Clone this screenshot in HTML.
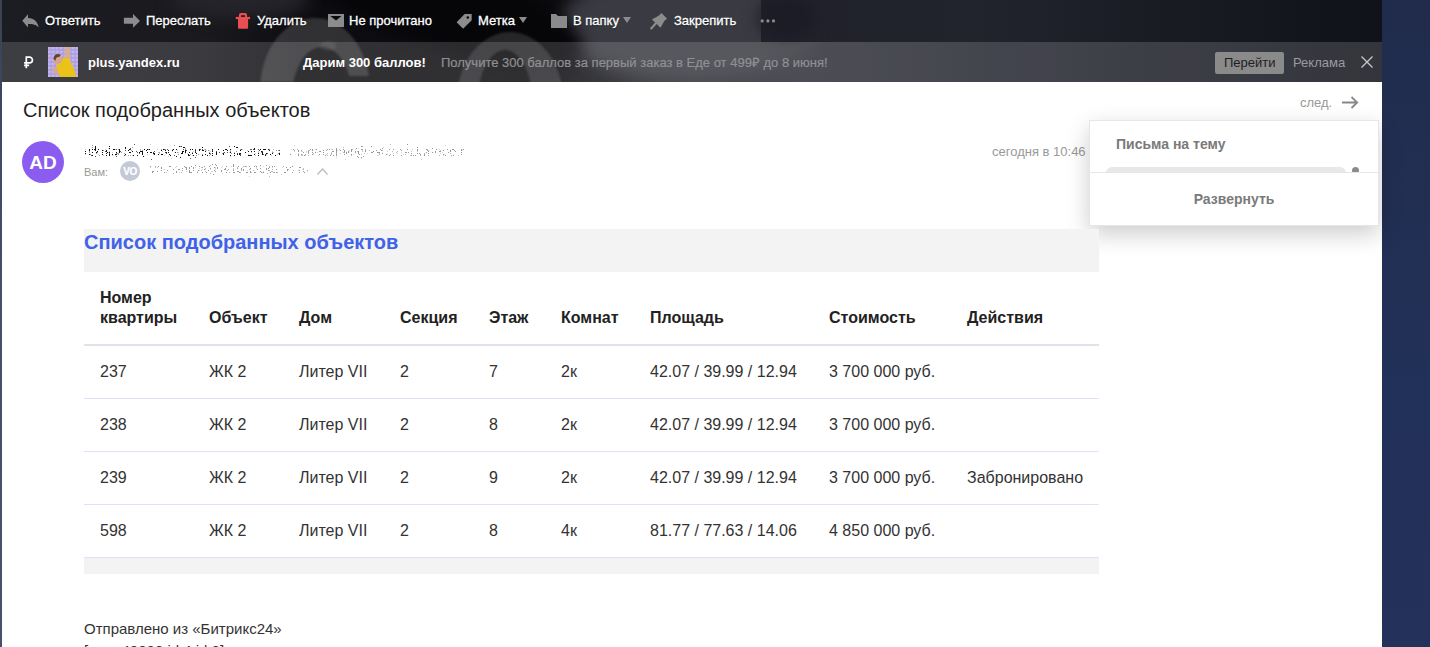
<!DOCTYPE html>
<html><head><meta charset="utf-8">
<style>
*{margin:0;padding:0;box-sizing:border-box}
html,body{width:1430px;height:647px;overflow:hidden}
body{background:#223056;font-family:"Liberation Sans",sans-serif;position:relative}
.a{position:absolute;white-space:nowrap}
#leftstrip{position:absolute;left:0;top:0;width:2px;height:647px;background:linear-gradient(180deg,#3b4152 0%,#434b63 25%,#46506c 50%,#47516d 100%)}
#rightbg{position:absolute;left:1382px;top:0;width:48px;height:647px;background:linear-gradient(180deg,#212c4c 0%,#223159 60%,#24315a 100%)}
#top{position:absolute;left:2px;top:0;width:1380px;height:82px;background:#111216;overflow:hidden}
#adbar{position:absolute;left:2px;top:42px;width:1380px;height:40px;background:rgba(255,255,255,0.15)}
#content{position:absolute;left:2px;top:82px;width:1380px;height:565px;background:#fff}
.tb{font-size:13px;color:#fff;line-height:16px;top:12.5px;-webkit-text-stroke:0.3px #fff;text-shadow:0 1px 1px rgba(0,0,0,.7)}
.ad{font-size:13px;line-height:16px;top:55px}
td.h{padding:17px 0 16px 16px;border-bottom:2px solid #dfe2e8;vertical-align:bottom}
tr.r td{padding:16px 0 16px 16px;border-bottom:1px solid #dde3f6;height:53px;white-space:nowrap}
</style></head><body>
<div id="leftstrip"></div>
<div id="rightbg"></div>
<div id="top">
  <svg style="position:absolute;left:-2px;top:0" width="1382" height="82">
    <defs>
      <linearGradient id="rg" x1="0" x2="1" y1="0" y2="0">
        <stop offset="0" stop-color="#1c1d22"/>
        <stop offset="0.15" stop-color="#19191e"/>
        <stop offset="0.22" stop-color="#0d0d11"/>
        <stop offset="0.40" stop-color="#0b0b0f"/>
        <stop offset="0.48" stop-color="#24252c"/>
        <stop offset="0.58" stop-color="#2e2f38"/>
        <stop offset="0.72" stop-color="#23252f"/>
        <stop offset="1" stop-color="#10121a"/>
      </linearGradient>
      <linearGradient id="rg2" x1="0" x2="1" y1="0" y2="0"><stop offset="0" stop-color="#20212a"/><stop offset="0.35" stop-color="#22242d"/><stop offset="1" stop-color="#10121a"/></linearGradient>
      <filter id="bl" x="-50%" y="-50%" width="200%" height="200%" color-interpolation-filters="sRGB"><feGaussianBlur stdDeviation="8"/></filter>
      <filter id="bl2" x="-20%" y="-20%" width="140%" height="140%" color-interpolation-filters="sRGB"><feGaussianBlur stdDeviation="1"/></filter>
      <clipPath id="c1"><path d="M0 0 H345 V82 H0 Z M345 0 H400 V76 H345 Z"/></clipPath>
    </defs>
    <rect x="0" y="0" width="1382" height="82" fill="url(#rg)"/>
    <ellipse cx="240" cy="0" rx="70" ry="18" fill="#24242a" filter="url(#bl)"/>
    <ellipse cx="690" cy="25" rx="130" ry="55" fill="#3a3a42" filter="url(#bl)"/>
    <rect x="761" y="0" width="621" height="42" fill="url(#rg2)"/>
    <ellipse cx="440" cy="5" rx="150" ry="42" fill="#060609" filter="url(#bl)" transform="rotate(18 440 5)"/>
    <ellipse cx="787" cy="18" rx="28" ry="22" fill="#1b1c25" filter="url(#bl)"/>
    <g filter="url(#bl2)">
    <path clip-path="url(#c1)" fill-rule="evenodd" fill="#ffffff" fill-opacity="0.15" d="M260 90 A55 72 0 1 1 370 90 A55 72 0 1 1 260 90 Z M292 97 A30 50 0 1 0 352 97 A30 50 0 1 0 292 97 Z"/>
    <ellipse cx="328" cy="46" rx="8" ry="5" fill="#ffffff" fill-opacity="0.08"/>
    <path fill-rule="evenodd" fill="#ffffff" fill-opacity="0.13" d="M457 100 A53 68 0 1 1 563 100 A53 68 0 1 1 457 100 Z M477 105 A28 55 0 1 0 533 105 A28 55 0 1 0 477 105 Z"/>
    </g>
  </svg>
</div>
<div id="adbar"></div>

<!-- toolbar -->
<svg class="a" style="left:22px;top:14px" width="17" height="14" viewBox="0 0 17 14"><path d="M0.3 6.8 L6 0.2 L6 3.9 C12 3.9 15.6 7.6 16.8 13.6 C14 10.6 11 10.1 6 10.1 L6 13.6 Z" fill="#8c8c8c"/></svg>
<div class="a tb" style="left:45px">Ответить</div>
<svg class="a" style="left:123px;top:14px" width="17" height="14" viewBox="0 0 17 14"><path d="M0.9 3.8 H10 V-0.1 L17 6.9 L10 13.8 V9.8 H0.9 Z" fill="#8c8c8c"/></svg>
<div class="a tb" style="left:146px">Переслать</div>
<svg class="a" style="left:235px;top:12px" width="16" height="18" viewBox="0 0 16 18"><path fill-rule="evenodd" d="M4 5 V2.8 Q4 1 5.8 1 H10.2 Q12 1 12 2.8 V5 Z M6 3.2 V5 H10 V3.2 Z" fill="#e85050"/><rect x="0.8" y="4.9" width="14.3" height="2.2" fill="#e85050"/><path d="M3 7 H13.1 V15.8 Q13.1 16.8 12.1 16.8 H4 Q3 16.8 3 15.8 Z" fill="#e85050"/></svg>
<div class="a tb" style="left:257px">Удалить</div>
<svg class="a" style="left:328px;top:14px" width="16" height="13" viewBox="0 0 16 13"><path d="M0 0 H16 V13 H0 Z" fill="#8c8c8c"/><path d="M2.3 2 L13.5 2 L8 6.4 Z" fill="#0a0a0d"/></svg>
<div class="a tb" style="left:349px">Не прочитано</div>
<svg class="a" style="left:456px;top:13px" width="17" height="17" viewBox="0 0 17 17"><path d="M8.6 1.1 H15.7 V7.2 L7.1 15.8 L0.6 9.3 Z" fill="#8c8c8c"/><circle cx="11.8" cy="4.5" r="1.3" fill="#0a0a0d"/></svg>
<div class="a tb" style="left:478px">Метка</div>
<svg class="a" style="left:519px;top:17px" width="8" height="6" viewBox="0 0 8 6"><path d="M0 0 H8 L4 6 Z" fill="#8c8c8c"/></svg>
<svg class="a" style="left:551px;top:14px" width="16" height="14" viewBox="0 0 16 14"><path d="M0 0 H5 L7 2 H16 V14 H0 Z" fill="#8a8a8a"/></svg>
<div class="a tb" style="left:573px">В папку</div>
<svg class="a" style="left:623px;top:17px" width="8" height="6" viewBox="0 0 8 6"><path d="M0 0 H8 L4 6 Z" fill="#8c8c8c"/></svg>
<svg class="a" style="left:650px;top:12px" width="18" height="18" viewBox="0 0 18 18"><path d="M11.4 1 L17 6.6 L15.3 8.3 L14.6 8.6 L10.5 15.7 L1.9 7.5 L9 3.4 L9.7 2.7 Z" fill="#8c8c8c"/><path d="M5.6 11.6 L1.3 16.4" stroke="#8c8c8c" stroke-width="2.2" stroke-linecap="round"/></svg>
<div class="a tb" style="left:674px">Закрепить</div>
<svg class="a" style="left:760px;top:19px" width="16" height="4" viewBox="0 0 16 4"><circle cx="2.2" cy="1.9" r="1.6" fill="#8c8c8c"/><circle cx="7.9" cy="1.9" r="1.6" fill="#8c8c8c"/><circle cx="13.5" cy="1.9" r="1.6" fill="#8c8c8c"/></svg>

<!-- ad bar -->
<svg class="a" style="left:22px;top:54px" width="14" height="16" viewBox="0 0 14 16"><path d="M4.3 14.2 V3.2 H7.6 A2.85 2.85 0 0 1 7.6 8.9 H2.1 M2.1 11.3 H7.2" stroke="#fff" stroke-width="1.7" fill="none"/></svg>
<svg class="a" style="left:48px;top:47px" width="30" height="30" viewBox="0 0 30 30">
  <defs><pattern id="spk" width="4" height="4" patternUnits="userSpaceOnUse"><rect width="4" height="4" fill="#b3a3e3"/><rect x="0" y="0" width="2" height="2" fill="#c6b2ea"/><rect x="2" y="2" width="2" height="2" fill="#9fa6e2"/><rect x="2" y="0" width="1" height="1" fill="#d8a8d8"/></pattern>
  <filter id="pb" color-interpolation-filters="sRGB"><feGaussianBlur stdDeviation="0.6"/></filter></defs>
  <rect width="30" height="30" fill="url(#spk)"/>
  <g filter="url(#pb)">
  <path d="M17 0 L22 0 L22 13 L17 14 Z" fill="#d9ad92"/>
  <path d="M8 19 L15 11 L21 11 L27 24 L28 30 L12 30 L10 25 Z" fill="#e9c21a"/>
  <path d="M4 21 L9 20 L11 27 L7 27 Z" fill="#d8a88c"/>
  <circle cx="10" cy="12.5" r="4.6" fill="#d6a68c"/>
  <path d="M5.5 12 C5.5 7 10 6 13 8 L11 10 C9 9.5 7.5 11 7.5 14 Z" fill="#5e4434"/>
  </g>
</svg>
<div class="a ad" style="left:88px;color:#fff;font-weight:bold">plus.yandex.ru</div>
<div class="a ad" style="left:303px;top:54.5px;color:#fff;font-weight:bold">Дарим 300 баллов!</div>
<div class="a ad" style="left:441px;top:54.5px;color:#8f9094;-webkit-text-stroke:0.2px #8f9094">Получите 300 баллов за первый заказ в Еде от 499₽ до 8 июня!</div>
<div class="a" style="left:1215px;top:52px;width:69px;height:22px;background:#8a8a8a;border-radius:2px"></div>
<div class="a ad" style="left:1224px;color:#1e1e1e">Перейти</div>
<div class="a ad" style="left:1293px;color:#9a9b9f">Реклама</div>
<svg class="a" style="left:1361px;top:56px" width="12" height="12" viewBox="0 0 12 12"><path d="M0.5 0.5 L11.5 11.5 M11.5 0.5 L0.5 11.5" stroke="#c8c8c8" stroke-width="1.3"/></svg>

<div id="content"></div>
<div class="a" style="left:23px;top:98.5px;font-size:20px;line-height:23px;color:#1e1e1e">Список подобранных объектов</div>
<div class="a" style="left:1300px;top:95px;font-size:13px;line-height:16px;color:#999">след.</div>
<svg class="a" style="left:1342px;top:96px" width="17" height="13" viewBox="0 0 17 13"><path d="M0 6.5 H15 M9.5 1 L15.2 6.5 L9.5 12" stroke="#888" stroke-width="1.8" fill="none"/></svg>

<div class="a" style="left:22px;top:141px;width:42px;height:42px;border-radius:50%;background:#8b5cf0"></div>
<div class="a" style="left:22px;top:141px;width:42px;height:42px;line-height:43px;text-align:center;font-size:19px;font-weight:bold;color:#fff">AD</div>
<div class="a" style="left:84px;top:166px;font-size:11px;line-height:13px;color:#999">Вам:</div>
<div class="a" style="left:120px;top:161px;width:20px;height:20px;border-radius:50%;background:#c4c9d7"></div>
<div class="a" style="left:120px;top:161px;width:20px;height:20px;line-height:21px;text-align:center;font-size:10px;font-weight:bold;color:#fff;letter-spacing:-0.4px;-webkit-text-stroke:0.2px #fff">VO</div>
<svg class="a" style="left:84px;top:144px" width="196" height="16"><path fill="#111" d="M11 2h1v1h-1zM25 2h1v1h-1zM95 2h1v1h-1zM150 2h1v1h-1zM11 3h1v1h-1zM41 3h1v1h-1zM99 3h1v1h-1zM100 3h1v1h-1zM118 3h1v1h-1zM152 3h1v1h-1zM153 3h1v1h-1zM11 4h1v1h-1zM25 4h1v1h-1zM41 4h1v1h-1zM170 4h1v1h-1zM5 5h1v1h-1zM8 5h1v1h-1zM10 5h1v1h-1zM11 5h1v1h-1zM14 5h1v1h-1zM29 5h1v1h-1zM30 5h1v1h-1zM35 5h1v1h-1zM45 5h1v1h-1zM60 5h1v1h-1zM63 5h1v1h-1zM65 5h1v1h-1zM79 5h1v1h-1zM89 5h1v1h-1zM92 5h1v1h-1zM106 5h1v1h-1zM108 5h1v1h-1zM115 5h1v1h-1zM128 5h1v1h-1zM134 5h1v1h-1zM141 5h1v1h-1zM142 5h1v1h-1zM146 5h1v1h-1zM170 5h1v1h-1zM176 5h1v1h-1zM179 5h1v1h-1zM180 5h1v1h-1zM181 5h1v1h-1zM184 5h1v1h-1zM5 6h1v1h-1zM11 6h1v1h-1zM18 6h1v1h-1zM22 6h1v1h-1zM35 6h1v1h-1zM44 6h1v1h-1zM62 6h1v1h-1zM77 6h1v1h-1zM81 6h1v1h-1zM84 6h1v1h-1zM88 6h1v1h-1zM101 6h1v1h-1zM111 6h1v1h-1zM115 6h1v1h-1zM118 6h1v1h-1zM119 6h1v1h-1zM139 6h1v1h-1zM143 6h1v1h-1zM156 6h1v1h-1zM185 6h1v1h-1zM1 7h1v1h-1zM13 7h1v1h-1zM22 7h1v1h-1zM35 7h1v1h-1zM48 7h1v1h-1zM56 7h1v1h-1zM57 7h1v1h-1zM58 7h1v1h-1zM98 7h1v1h-1zM99 7h1v1h-1zM101 7h1v1h-1zM121 7h1v1h-1zM128 7h1v1h-1zM164 7h1v1h-1zM167 7h1v1h-1zM170 7h1v1h-1zM177 7h1v1h-1zM8 8h1v1h-1zM12 8h1v1h-1zM18 8h1v1h-1zM23 8h1v1h-1zM25 8h1v1h-1zM32 8h1v1h-1zM35 8h1v1h-1zM45 8h1v1h-1zM46 8h1v1h-1zM55 8h1v1h-1zM58 8h1v1h-1zM63 8h1v1h-1zM66 8h1v1h-1zM67 8h1v1h-1zM82 8h1v1h-1zM84 8h1v1h-1zM91 8h1v1h-1zM98 8h1v1h-1zM101 8h1v1h-1zM105 8h1v1h-1zM111 8h1v1h-1zM132 8h1v1h-1zM146 8h1v1h-1zM161 8h1v1h-1zM178 8h1v1h-1zM1 9h1v1h-1zM22 9h1v1h-1zM58 9h1v1h-1zM69 9h1v1h-1zM70 9h1v1h-1zM97 9h1v1h-1zM98 9h1v1h-1zM108 9h1v1h-1zM112 9h1v1h-1zM125 9h1v1h-1zM128 9h1v1h-1zM132 9h1v1h-1zM139 9h1v1h-1zM150 9h1v1h-1zM155 9h1v1h-1zM156 9h1v1h-1zM174 9h1v1h-1zM178 9h1v1h-1zM182 9h1v1h-1zM188 9h1v1h-1zM195 9h1v1h-1zM5 10h1v1h-1zM18 10h1v1h-1zM25 10h1v1h-1zM28 10h1v1h-1zM31 10h1v1h-1zM32 10h1v1h-1zM41 10h1v1h-1zM58 10h1v1h-1zM70 10h1v1h-1zM74 10h1v1h-1zM77 10h1v1h-1zM78 10h1v1h-1zM85 10h1v1h-1zM104 10h1v1h-1zM121 10h1v1h-1zM132 10h1v1h-1zM139 10h1v1h-1zM153 10h1v1h-1zM155 10h1v1h-1zM170 10h1v1h-1zM178 10h1v1h-1zM186 10h1v1h-1zM195 10h1v1h-1zM8 11h1v1h-1zM22 11h1v1h-1zM25 11h1v1h-1zM49 11h1v1h-1zM53 11h1v1h-1zM86 11h1v1h-1zM104 11h1v1h-1zM105 11h1v1h-1zM109 11h1v1h-1zM118 11h1v1h-1zM123 11h1v1h-1zM128 11h1v1h-1zM146 11h1v1h-1zM150 11h1v1h-1zM164 11h1v1h-1zM165 11h1v1h-1zM166 11h1v1h-1zM167 11h1v1h-1zM174 11h1v1h-1zM181 11h1v1h-1zM191 11h1v1h-1zM59 12h1v1h-1zM92 12h1v1h-1zM96 13h1v1h-1z"/><path fill="#555" d="M50 0h1v1h-1zM97 2h1v1h-1zM145 2h1v1h-1zM46 4h1v1h-1zM32 5h1v1h-1zM46 5h1v1h-1zM80 5h1v1h-1zM83 5h1v1h-1zM99 5h1v1h-1zM111 5h1v1h-1zM116 5h1v1h-1zM118 5h1v1h-1zM157 5h1v1h-1zM166 5h1v1h-1zM167 5h1v1h-1zM169 5h1v1h-1zM174 5h1v1h-1zM41 6h1v1h-1zM102 6h1v1h-1zM128 6h1v1h-1zM175 6h1v1h-1zM195 6h1v1h-1zM21 7h1v1h-1zM36 7h1v1h-1zM52 7h1v1h-1zM70 7h1v1h-1zM111 7h1v1h-1zM132 7h1v1h-1zM178 7h1v1h-1zM53 8h1v1h-1zM69 8h1v1h-1zM81 8h1v1h-1zM135 8h1v1h-1zM140 8h1v1h-1zM143 8h1v1h-1zM25 9h1v1h-1zM55 9h1v1h-1zM82 9h1v1h-1zM153 9h1v1h-1zM183 9h1v1h-1zM156 10h1v1h-1zM179 10h1v1h-1zM181 10h1v1h-1zM7 11h1v1h-1zM40 11h1v1h-1zM90 11h1v1h-1zM156 11h1v1h-1zM11 12h1v1h-1zM32 12h1v1h-1zM111 13h1v1h-1zM106 14h1v1h-1zM67 15h1v1h-1z"/><path fill="#999" d="M8 1h1v1h-1zM90 1h1v1h-1zM96 2h1v1h-1zM8 3h1v1h-1zM48 3h1v1h-1zM101 4h1v1h-1zM34 5h1v1h-1zM56 5h1v1h-1zM64 5h1v1h-1zM77 5h1v1h-1zM81 5h1v1h-1zM101 5h1v1h-1zM121 5h1v1h-1zM156 5h1v1h-1zM185 5h1v1h-1zM19 6h1v1h-1zM47 6h1v1h-1zM58 6h1v1h-1zM124 6h1v1h-1zM192 6h1v1h-1zM194 6h1v1h-1zM5 7h1v1h-1zM146 7h1v1h-1zM152 7h1v1h-1zM5 8h1v1h-1zM13 8h1v1h-1zM37 8h1v1h-1zM75 8h1v1h-1zM93 8h1v1h-1zM108 8h1v1h-1zM125 8h1v1h-1zM177 8h1v1h-1zM188 8h1v1h-1zM12 9h1v1h-1zM32 9h1v1h-1zM33 9h1v1h-1zM34 9h1v1h-1zM40 9h1v1h-1zM126 9h1v1h-1zM138 9h1v1h-1zM147 9h1v1h-1zM194 9h1v1h-1zM6 10h1v1h-1zM34 10h1v1h-1zM94 10h1v1h-1zM106 10h1v1h-1zM114 10h1v1h-1zM118 10h1v1h-1zM126 10h1v1h-1zM182 10h1v1h-1zM15 11h1v1h-1zM44 11h1v1h-1zM46 11h1v1h-1zM112 11h1v1h-1zM125 11h1v1h-1z"/><path fill="#ccc" d="M66 0h1v1h-1zM24 4h1v1h-1zM1 5h1v1h-1zM21 5h1v1h-1zM31 5h1v1h-1zM73 5h1v1h-1zM88 5h1v1h-1zM120 5h1v1h-1zM158 5h1v1h-1zM189 5h1v1h-1zM56 6h1v1h-1zM93 6h1v1h-1zM121 6h1v1h-1zM122 6h1v1h-1zM125 6h1v1h-1zM146 6h1v1h-1zM163 6h1v1h-1zM25 7h1v1h-1zM78 7h1v1h-1zM88 7h1v1h-1zM109 7h1v1h-1zM126 7h1v1h-1zM174 7h1v1h-1zM188 7h1v1h-1zM24 8h1v1h-1zM28 8h1v1h-1zM74 8h1v1h-1zM94 8h1v1h-1zM139 8h1v1h-1zM145 8h1v1h-1zM150 8h1v1h-1zM167 8h1v1h-1zM174 8h1v1h-1zM189 8h1v1h-1zM195 8h1v1h-1zM75 9h1v1h-1zM101 9h1v1h-1zM103 9h1v1h-1zM171 9h1v1h-1zM1 10h1v1h-1zM14 10h1v1h-1zM63 10h1v1h-1zM69 10h1v1h-1zM164 10h1v1h-1zM193 10h1v1h-1zM19 11h1v1h-1zM28 11h1v1h-1zM31 11h1v1h-1zM41 11h1v1h-1zM48 11h1v1h-1zM80 11h1v1h-1zM108 11h1v1h-1zM171 11h1v1h-1zM187 11h1v1h-1zM84 12h1v1h-1zM146 12h1v1h-1zM87 14h1v1h-1z"/></svg>
<svg class="a" style="left:289px;top:144px" width="175" height="16"><path fill="#999" d="M118 0h1v1h-1zM72 2h1v1h-1zM73 2h1v1h-1zM82 2h1v1h-1zM128 3h1v1h-1zM47 4h1v1h-1zM67 4h1v1h-1zM93 4h1v1h-1zM143 4h1v1h-1zM4 5h1v1h-1zM21 5h1v1h-1zM23 5h1v1h-1zM27 5h1v1h-1zM38 5h1v1h-1zM40 5h1v1h-1zM47 5h1v1h-1zM54 5h1v1h-1zM62 5h1v1h-1zM72 5h1v1h-1zM91 5h1v1h-1zM100 5h1v1h-1zM104 5h1v1h-1zM111 5h1v1h-1zM118 5h1v1h-1zM128 5h1v1h-1zM137 5h1v1h-1zM147 5h1v1h-1zM158 5h1v1h-1zM163 5h1v1h-1zM164 5h1v1h-1zM172 5h1v1h-1zM174 5h1v1h-1zM5 6h1v1h-1zM9 6h1v1h-1zM12 6h1v1h-1zM23 6h1v1h-1zM34 6h1v1h-1zM47 6h1v1h-1zM51 6h1v1h-1zM55 6h1v1h-1zM62 6h1v1h-1zM76 6h1v1h-1zM87 6h1v1h-1zM92 6h1v1h-1zM112 6h1v1h-1zM128 6h1v1h-1zM138 6h1v1h-1zM154 6h1v1h-1zM161 6h1v1h-1zM165 6h1v1h-1zM172 6h1v1h-1zM9 7h1v1h-1zM19 7h1v1h-1zM30 7h1v1h-1zM31 7h1v1h-1zM43 7h1v1h-1zM44 7h1v1h-1zM47 7h1v1h-1zM55 7h1v1h-1zM59 7h1v1h-1zM62 7h1v1h-1zM66 7h1v1h-1zM69 7h1v1h-1zM76 7h1v1h-1zM84 7h1v1h-1zM139 7h1v1h-1zM146 7h1v1h-1zM150 7h1v1h-1zM151 7h1v1h-1zM161 7h1v1h-1zM166 7h1v1h-1zM14 8h1v1h-1zM19 8h1v1h-1zM23 8h1v1h-1zM26 8h1v1h-1zM34 8h1v1h-1zM47 8h1v1h-1zM55 8h1v1h-1zM57 8h1v1h-1zM59 8h1v1h-1zM66 8h1v1h-1zM69 8h1v1h-1zM82 8h1v1h-1zM83 8h1v1h-1zM88 8h1v1h-1zM89 8h1v1h-1zM90 8h1v1h-1zM116 8h1v1h-1zM117 8h1v1h-1zM119 8h1v1h-1zM137 8h1v1h-1zM143 8h1v1h-1zM146 8h1v1h-1zM159 8h1v1h-1zM172 8h1v1h-1zM42 9h1v1h-1zM57 9h1v1h-1zM69 9h1v1h-1zM93 9h1v1h-1zM122 9h1v1h-1zM128 9h1v1h-1zM130 9h1v1h-1zM139 9h1v1h-1zM1 10h1v1h-1zM9 10h1v1h-1zM12 10h1v1h-1zM16 10h1v1h-1zM23 10h1v1h-1zM30 10h1v1h-1zM34 10h1v1h-1zM47 10h1v1h-1zM55 10h1v1h-1zM62 10h1v1h-1zM70 10h1v1h-1zM97 10h1v1h-1zM131 10h1v1h-1zM135 10h1v1h-1zM154 10h1v1h-1zM172 10h1v1h-1zM9 11h1v1h-1zM15 11h1v1h-1zM36 11h1v1h-1zM41 11h1v1h-1zM44 11h1v1h-1zM47 11h1v1h-1zM100 11h1v1h-1zM104 11h1v1h-1zM112 11h1v1h-1zM122 11h1v1h-1zM124 11h1v1h-1zM126 11h1v1h-1zM135 11h1v1h-1zM156 11h1v1h-1zM164 11h1v1h-1zM68 12h1v1h-1zM74 12h1v1h-1zM69 13h1v1h-1zM72 13h1v1h-1z"/><path fill="#bbb" d="M101 0h1v1h-1zM54 3h1v1h-1zM8 5h1v1h-1zM43 5h1v1h-1zM50 5h1v1h-1zM63 5h1v1h-1zM73 5h1v1h-1zM76 5h1v1h-1zM138 5h1v1h-1zM19 6h1v1h-1zM20 6h1v1h-1zM37 6h1v1h-1zM73 6h1v1h-1zM80 6h1v1h-1zM93 6h1v1h-1zM68 7h1v1h-1zM103 7h1v1h-1zM108 7h1v1h-1zM122 7h1v1h-1zM54 8h1v1h-1zM107 8h1v1h-1zM19 9h1v1h-1zM24 9h1v1h-1zM38 9h1v1h-1zM47 9h1v1h-1zM75 9h1v1h-1zM90 9h1v1h-1zM135 9h1v1h-1zM161 9h1v1h-1zM37 10h1v1h-1zM42 10h1v1h-1zM72 10h1v1h-1zM90 10h1v1h-1zM101 10h1v1h-1zM116 10h1v1h-1zM13 11h1v1h-1zM19 11h1v1h-1zM38 11h1v1h-1zM62 11h1v1h-1zM131 11h1v1h-1zM139 11h1v1h-1zM150 11h1v1h-1zM162 11h1v1h-1z"/><path fill="#d5d5d5" d="M5 1h1v1h-1zM156 1h1v1h-1zM94 3h1v1h-1zM69 4h1v1h-1zM2 5h1v1h-1zM26 5h1v1h-1zM42 5h1v1h-1zM66 5h1v1h-1zM123 5h1v1h-1zM150 5h1v1h-1zM48 6h1v1h-1zM60 6h1v1h-1zM139 6h1v1h-1zM151 6h1v1h-1zM173 6h1v1h-1zM5 7h1v1h-1zM12 7h1v1h-1zM13 7h1v1h-1zM17 7h1v1h-1zM73 7h1v1h-1zM98 7h1v1h-1zM128 7h1v1h-1zM17 8h1v1h-1zM28 8h1v1h-1zM42 8h1v1h-1zM112 8h1v1h-1zM153 8h1v1h-1zM9 9h1v1h-1zM51 9h1v1h-1zM78 9h1v1h-1zM104 9h1v1h-1zM108 9h1v1h-1zM151 9h1v1h-1zM13 10h1v1h-1zM24 10h1v1h-1zM64 10h1v1h-1zM98 10h1v1h-1zM114 10h1v1h-1zM155 10h1v1h-1zM12 11h1v1h-1zM16 11h1v1h-1zM29 11h1v1h-1zM88 11h1v1h-1zM89 11h1v1h-1zM121 11h1v1h-1zM154 11h1v1h-1zM169 11h1v1h-1zM59 12h1v1h-1zM162 12h1v1h-1zM36 13h1v1h-1zM47 13h1v1h-1zM72 14h1v1h-1zM56 15h1v1h-1zM132 15h1v1h-1z"/></svg>
<svg class="a" style="left:150px;top:162px" width="160" height="16"><path fill="#999" d="M62 2h1v1h-1zM65 2h1v1h-1zM83 2h1v1h-1zM45 3h1v1h-1zM66 3h1v1h-1zM83 3h1v1h-1zM110 3h1v1h-1zM116 3h1v1h-1zM0 4h1v1h-1zM8 4h1v1h-1zM19 4h1v1h-1zM20 4h1v1h-1zM34 4h1v1h-1zM41 4h1v1h-1zM49 4h1v1h-1zM54 4h1v1h-1zM59 4h1v1h-1zM76 4h1v1h-1zM83 4h1v1h-1zM88 4h1v1h-1zM95 4h1v1h-1zM99 4h1v1h-1zM104 4h1v1h-1zM106 4h1v1h-1zM122 4h1v1h-1zM124 4h1v1h-1zM142 4h1v1h-1zM11 5h1v1h-1zM35 5h1v1h-1zM36 5h1v1h-1zM39 5h1v1h-1zM43 5h1v1h-1zM52 5h1v1h-1zM64 5h1v1h-1zM67 5h1v1h-1zM119 5h1v1h-1zM136 5h1v1h-1zM140 5h1v1h-1zM149 5h1v1h-1zM150 5h1v1h-1zM11 6h1v1h-1zM32 6h1v1h-1zM36 6h1v1h-1zM39 6h1v1h-1zM43 6h1v1h-1zM60 6h1v1h-1zM67 6h1v1h-1zM75 6h1v1h-1zM87 6h1v1h-1zM91 6h1v1h-1zM100 6h1v1h-1zM110 6h1v1h-1zM116 6h1v1h-1zM118 6h1v1h-1zM23 7h1v1h-1zM28 7h1v1h-1zM29 7h1v1h-1zM36 7h1v1h-1zM54 7h1v1h-1zM74 7h1v1h-1zM75 7h1v1h-1zM91 7h1v1h-1zM93 7h1v1h-1zM107 7h1v1h-1zM116 7h1v1h-1zM126 7h1v1h-1zM137 7h1v1h-1zM11 8h1v1h-1zM17 8h1v1h-1zM32 8h1v1h-1zM39 8h1v1h-1zM43 8h1v1h-1zM48 8h1v1h-1zM58 8h1v1h-1zM64 8h1v1h-1zM71 8h1v1h-1zM83 8h1v1h-1zM93 8h1v1h-1zM118 8h1v1h-1zM137 8h1v1h-1zM149 8h1v1h-1zM2 9h1v1h-1zM3 9h1v1h-1zM7 9h1v1h-1zM26 9h1v1h-1zM39 9h1v1h-1zM65 9h1v1h-1zM71 9h1v1h-1zM87 9h1v1h-1zM88 9h1v1h-1zM100 9h1v1h-1zM110 9h1v1h-1zM153 9h1v1h-1zM2 10h1v1h-1zM14 10h1v1h-1zM26 10h1v1h-1zM39 10h1v1h-1zM40 10h1v1h-1zM41 10h1v1h-1zM47 10h1v1h-1zM52 10h1v1h-1zM56 10h1v1h-1zM76 10h1v1h-1zM83 10h1v1h-1zM84 10h1v1h-1zM89 10h1v1h-1zM96 10h1v1h-1zM97 10h1v1h-1zM100 10h1v1h-1zM104 10h1v1h-1zM105 10h1v1h-1zM111 10h1v1h-1zM113 10h1v1h-1zM120 10h1v1h-1zM124 10h1v1h-1zM126 10h1v1h-1zM134 10h1v1h-1zM135 10h1v1h-1zM142 10h1v1h-1zM149 10h1v1h-1zM154 10h1v1h-1zM63 12h1v1h-1z"/><path fill="#bbb" d="M60 3h1v1h-1zM5 4h1v1h-1zM26 4h1v1h-1zM93 4h1v1h-1zM96 4h1v1h-1zM119 4h1v1h-1zM133 4h1v1h-1zM5 5h1v1h-1zM7 5h1v1h-1zM87 5h1v1h-1zM55 6h1v1h-1zM153 6h1v1h-1zM14 7h1v1h-1zM78 7h1v1h-1zM83 7h1v1h-1zM99 7h1v1h-1zM122 7h1v1h-1zM138 7h1v1h-1zM153 7h1v1h-1zM51 8h1v1h-1zM77 8h1v1h-1zM91 8h1v1h-1zM103 8h1v1h-1zM119 8h1v1h-1zM143 8h1v1h-1zM157 8h1v1h-1zM55 9h1v1h-1zM121 9h1v1h-1zM122 9h1v1h-1zM16 10h1v1h-1zM31 10h1v1h-1zM79 10h1v1h-1zM90 10h1v1h-1zM123 10h1v1h-1zM127 10h1v1h-1zM23 11h1v1h-1zM60 11h1v1h-1zM117 11h1v1h-1zM131 12h1v1h-1zM119 14h1v1h-1z"/><path fill="#d5d5d5" d="M105 3h1v1h-1zM72 4h1v1h-1zM81 4h1v1h-1zM94 4h1v1h-1zM113 4h1v1h-1zM0 5h1v1h-1zM25 5h1v1h-1zM45 5h1v1h-1zM51 5h1v1h-1zM65 5h1v1h-1zM71 5h1v1h-1zM92 5h1v1h-1zM106 5h1v1h-1zM122 5h1v1h-1zM132 5h1v1h-1zM49 6h1v1h-1zM65 6h1v1h-1zM83 6h1v1h-1zM106 6h1v1h-1zM52 7h1v1h-1zM55 7h1v1h-1zM60 7h1v1h-1zM65 7h1v1h-1zM100 7h1v1h-1zM152 7h1v1h-1zM49 8h1v1h-1zM97 8h1v1h-1zM148 8h1v1h-1zM36 9h1v1h-1zM47 9h1v1h-1zM61 9h1v1h-1zM62 9h1v1h-1zM113 9h1v1h-1zM157 9h1v1h-1zM29 10h1v1h-1zM101 10h1v1h-1zM112 10h1v1h-1zM72 11h1v1h-1zM99 14h1v1h-1z"/></svg>
<svg class="a" style="left:317px;top:168px" width="11" height="7" viewBox="0 0 11 7"><path d="M0.5 6.5 L5.5 1 L10.5 6.5" stroke="#bbb" stroke-width="1.2" fill="none"/></svg>
<div class="a" style="left:992px;top:144px;font-size:13px;line-height:16px;color:#999">сегодня в 10:46</div>

<!-- popup -->
<div class="a" style="left:1089px;top:120px;width:290px;height:106px;background:#fff;border:1px solid #e6e6e6;box-shadow:0 8px 22px rgba(0,0,0,.2);overflow:hidden">
  <div class="a" style="left:26px;top:15px;font-size:14px;line-height:17px;font-weight:bold;color:#7a7a7a">Письма на тему</div>
  <div class="a" style="left:16px;top:46px;width:240px;height:12px;border-radius:6px;background:#e8e8e8"></div>
  <div class="a" style="left:262px;top:46px;width:7px;height:7px;border-radius:50%;background:#8a8a8a"></div>
  <div class="a" style="left:0;top:51px;width:288px;height:53px;background:#fff;border-top:1px solid #e6e6e6"></div>
  <div class="a" style="left:0;top:69.5px;width:288px;text-align:center;font-size:14px;line-height:17px;font-weight:bold;color:#7a7a7a">Развернуть</div>
</div>

<!-- table -->
<div class="a" style="left:84px;top:229px;width:1015px;height:43px;background:#f3f3f4"></div>
<div class="a" style="left:84px;top:231px;font-size:20px;line-height:23px;font-weight:bold;color:#3f62e8">Список подобранных объектов</div>
<table class="a" style="left:84px;top:271px;width:1015px;border-collapse:collapse;table-layout:fixed;font-size:16px;line-height:20px;color:#333">
<colgroup><col style="width:109px"><col style="width:90px"><col style="width:101px"><col style="width:89px"><col style="width:72px"><col style="width:89px"><col style="width:179px"><col style="width:138px"><col style="width:148px"></colgroup>
<tr style="font-weight:bold;color:#222">
<td style="padding:17px 0 16px 16px;border-bottom:2px solid #dfe2e8;vertical-align:bottom">Номер<br>квартиры</td><td class="h">Объект</td><td class="h">Дом</td><td class="h">Секция</td><td class="h">Этаж</td><td class="h">Комнат</td><td class="h">Площадь</td><td class="h">Стоимость</td><td class="h">Действия</td></tr>
<tr class="r"><td>237</td><td>ЖК 2</td><td>Литер VII</td><td>2</td><td>7</td><td>2к</td><td>42.07 / 39.99 / 12.94</td><td>3 700 000 руб.</td><td></td></tr>
<tr class="r"><td>238</td><td>ЖК 2</td><td>Литер VII</td><td>2</td><td>8</td><td>2к</td><td>42.07 / 39.99 / 12.94</td><td>3 700 000 руб.</td><td></td></tr>
<tr class="r"><td>239</td><td>ЖК 2</td><td>Литер VII</td><td>2</td><td>9</td><td>2к</td><td>42.07 / 39.99 / 12.94</td><td>3 700 000 руб.</td><td>Забронировано</td></tr>
<tr class="r"><td>598</td><td>ЖК 2</td><td>Литер VII</td><td>2</td><td>8</td><td>4к</td><td>81.77 / 77.63 / 14.06</td><td>4 850 000 руб.</td><td></td></tr>
</table>
<div class="a" style="left:84px;top:558px;width:1015px;height:16px;background:#f3f3f3"></div>
<div class="a" style="left:84px;top:617.5px;font-size:15px;line-height:22px;color:#333">Отправлено из «Битрикс24»<br>[user 40000 id 4 id 0]</div>
</body></html>
